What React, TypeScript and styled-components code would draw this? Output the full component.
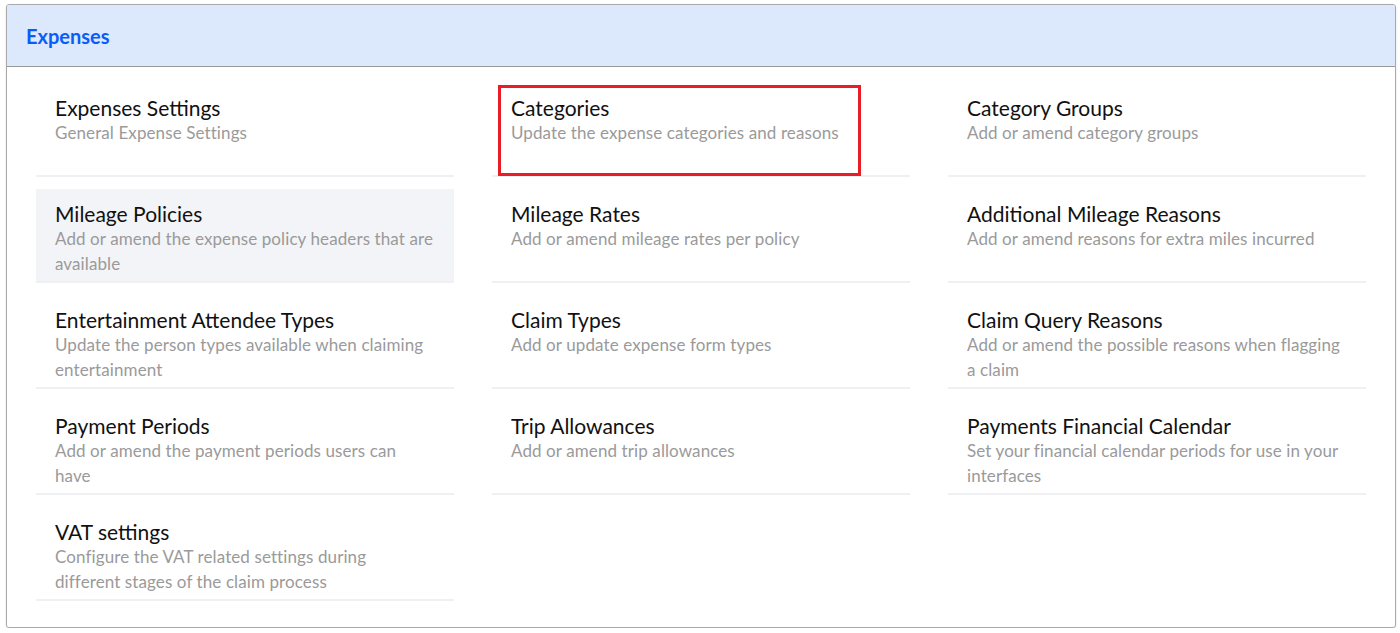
import styled, { createGlobalStyle } from 'styled-components';

const GlobalStyle = createGlobalStyle`
  body {
    margin: 0;
    background: #fff;
    font-family: Lato, "Noto Sans", sans-serif;
  }
`;

const items = [
  { title: 'Expenses Settings', desc: 'General Expense Settings' },
  { title: 'Categories', desc: 'Update the expense categories and reasons', marked: true },
  { title: 'Category Groups', desc: 'Add or amend category groups' },
  { title: 'Mileage Policies', desc: 'Add or amend the expense policy headers that are available', hover: true },
  { title: 'Mileage Rates', desc: 'Add or amend mileage rates per policy' },
  { title: 'Additional Mileage Reasons', desc: 'Add or amend reasons for extra miles incurred' },
  { title: 'Entertainment Attendee Types', desc: 'Update the person types available when claiming entertainment' },
  { title: 'Claim Types', desc: 'Add or update expense form types' },
  { title: 'Claim Query Reasons', desc: 'Add or amend the possible reasons when flagging a claim' },
  { title: 'Payment Periods', desc: 'Add or amend the payment periods users can have' },
  { title: 'Trip Allowances', desc: 'Add or amend trip allowances' },
  { title: 'Payments Financial Calendar', desc: 'Set your financial calendar periods for use in your interfaces' },
  { title: 'VAT settings', desc: 'Configure the VAT related settings during different stages of the claim process' },
];

const App = () => (
  <>
    <GlobalStyle />
    <Page>
      <Panel>
        <Header>
          <Title>Expenses</Title>
        </Header>
        <Grid>
          {items.map((item) => (
            <Item key={item.title} $hover={item.hover}>
              <ItemTitle>{item.title}</ItemTitle>
              <ItemDesc>{item.desc}</ItemDesc>
              {item.marked && <Marker />}
            </Item>
          ))}
        </Grid>
      </Panel>
    </Page>
  </>
);

const Page = styled.div`
  padding: 4px 4px 0 6px;
`;

const Panel = styled.div`
  border: 1px solid #a9a9a9;
  border-radius: 3px;
  height: 624px;
  box-sizing: border-box;
  box-shadow: 0 1px 2px rgba(0, 0, 0, 0.15);
  overflow: hidden;
`;

const Header = styled.div`
  height: 61px;
  background: #dce8fc;
  border-bottom: 1px solid #9a9a9a;
  display: flex;
  align-items: center;
  padding-left: 19px;
`;

const Title = styled.h1`
  margin: 0;
  font-size: 20px;
  font-weight: 700;
  color: #0a5cf8;
`;

const Grid = styled.div`
  display: grid;
  grid-template-columns: repeat(3, 418px);
  column-gap: 38px;
  row-gap: 12px;
  padding: 16px 0 0 29px;
`;

const Item = styled.div<{ $hover?: boolean }>`
  position: relative;
  height: 94px;
  box-sizing: border-box;
  padding: 12px 19px 0;
  border-bottom: 2px solid #f0f0f2;
  background: ${(p) => (p.$hover ? '#f3f4f8' : 'transparent')};
`;

const ItemTitle = styled.div`
  font-size: 21px;
  line-height: 25px;
  color: #111;
`;

const ItemDesc = styled.div`
  font-size: 17px;
  letter-spacing: 0.1px;
  line-height: 25px;
  color: #9a9a9a;
`;

const Marker = styled.div`
  position: absolute;
  left: 6px;
  top: 2px;
  width: 363px;
  height: 91px;
  box-sizing: border-box;
  border: 3px solid #e81d26;
  pointer-events: none;
`;

export default App;
